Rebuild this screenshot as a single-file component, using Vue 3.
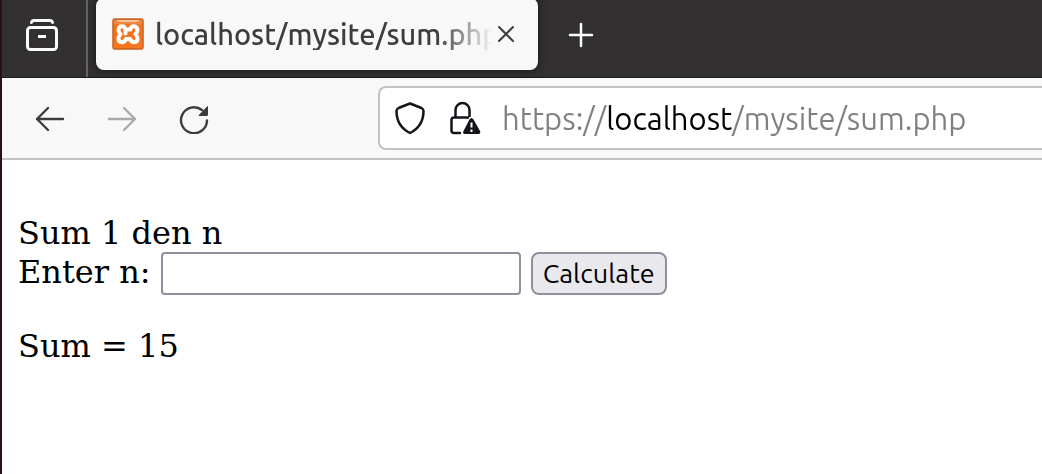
<script setup>
import { ref } from 'vue'

const address = ref('https://localhost/mysite/sum.php')
const n = ref('')
const sum = ref(15)

function calculate() {
  const count = Number(n.value)
  sum.value = (count * (count + 1)) / 2
}
</script>

<template>
  <div class="window">
    <header class="tabs">
      <button class="icon-button archive" aria-label="Recent browsing">
        <svg width="34" height="34" viewBox="0 0 34 34" fill="none" stroke="#fbfbfe" stroke-width="3" stroke-linecap="round">
          <path d="M6.500 4.500Q7 2.500 9 2.500H25Q27 2.500 27.500 4.500" />
          <rect x="2.500" y="9.500" width="29" height="22" rx="3" />
          <path d="M13 18.500H21" stroke-linecap="butt" />
        </svg>
      </button>
      <div class="tab">
        <svg class="favicon" width="32" height="32" viewBox="0 0 32 32">
          <defs>
            <linearGradient id="orange" x1="0" y1="0" x2="0" y2="1">
              <stop offset="0" stop-color="#d9834c" />
              <stop offset="0.14" stop-color="#ef8a46" />
              <stop offset="0.2" stop-color="#f17422" />
              <stop offset="1" stop-color="#f8761d" />
            </linearGradient>
          </defs>
          <rect x="1" y="1" width="30" height="30" rx="2" fill="url(#orange)" stroke="#c8601c" stroke-width="1.500" />
          <path d="M4 2H28Q26 4 22 4H10Q6 4 4 2Z" fill="#f8c39c" />
          <path d="M13.500 15.500V12C13.500 7 6.500 7 6.500 12Q6.500 14.500 8.500 16Q6.500 18 6.500 20.500C6.500 25.500 12.500 25 14 21H18C19.500 25 25.500 25.500 25.500 20.500Q25.500 18 23.500 16Q25.500 14.500 25.500 12C25.500 7 18.500 7 18.500 11.500H13.500" fill="none" stroke="#fff" stroke-width="4" stroke-linejoin="round" stroke-linecap="round" />
        </svg>
        <span class="tab-title">localhost/mysite/sum.php</span>
        <button class="icon-button close" aria-label="Close tab">
          <svg width="18" height="18" viewBox="0 0 18 18" stroke="#3d3d3d" stroke-width="2" stroke-linecap="round">
            <path d="M2 2L16 16M16 2L2 16" />
          </svg>
        </button>
      </div>
      <button class="icon-button new-tab" aria-label="New tab">
        <svg width="26" height="26" viewBox="0 0 26 26" stroke="#fbfbfe" stroke-width="2.500" stroke-linecap="round">
          <path d="M2 13H24M13 2V24" />
        </svg>
      </button>
    </header>

    <nav class="toolbar">
      <button class="icon-button" aria-label="Back">
        <svg width="32" height="32" viewBox="0 0 32 32" fill="none" stroke="#3d3d3d" stroke-width="2.400" stroke-linecap="round" stroke-linejoin="round">
          <path d="M29 17H3M14 6L3 17L14 28" />
        </svg>
      </button>
      <button class="icon-button" aria-label="Forward" disabled>
        <svg width="32" height="32" viewBox="0 0 32 32" fill="none" stroke="#aaa" stroke-width="2.400" stroke-linecap="round" stroke-linejoin="round">
          <path d="M3 17H29M18 6L29 17L18 28" />
        </svg>
      </button>
      <button class="icon-button" aria-label="Reload">
        <svg width="32" height="32" viewBox="0 0 32 32" fill="none" stroke="#3d3d3d" stroke-width="2.400" stroke-linecap="round">
          <path d="M29 18.500A13 13 0 1 1 24 8" />
          <path d="M30 4.500V12.500Q30 14 28.500 14H21.500Q20 14 21 12.800L28.500 5Q30 3.500 30 4.500Z" fill="#3d3d3d" stroke="none" />
        </svg>
      </button>
      <div class="address">
        <svg width="32" height="34" viewBox="0 0 32 34" fill="none" stroke="#15141a" stroke-width="2.500" stroke-linejoin="round">
          <path d="M16 2.500L27.500 7Q29.500 8 29.500 10C29.500 20 26 27 16 32C6 27 2.500 20 2.500 10Q2.500 8 4.500 7Z" />
        </svg>
        <svg class="lock" width="32" height="34" viewBox="0 0 32 34" fill="none" stroke="#15141a" stroke-width="2.500">
          <path d="M6.500 17V9A7 7 0 0 1 20.500 9V16" />
          <path d="M11 32H5Q2.500 32 2.500 29.500V19Q2.500 16.500 5 16.500H19" stroke-linecap="round" />
          <path d="M20.500 18.500Q22.500 15.500 24.500 18.500L31 30Q32 33 29.500 33H16Q13 33 14.500 30Z" fill="#15141a" stroke="none" />
          <path d="M22.500 21.500V26.500M22.500 28.500V31" stroke="#fff" stroke-width="2" />
        </svg>
        <input v-model="address" class="url" type="text" aria-label="Address" spellcheck="false" />
      </div>
    </nav>

    <main class="page">
      <div>Sum 1 den n</div>
      <form class="entry" @submit.prevent="calculate">
        <label for="n">Enter n:</label>
        <input id="n" v-model="n" class="number" type="text" />
        <button class="calculate" type="submit">Calculate</button>
      </form>
      <p class="result">Sum = {{ sum }}</p>
    </main>
  </div>
</template>

<style>
body {
  background: #fff;
}
</style>

<style scoped>
.window {
  min-height: 100vh;
  box-sizing: border-box;
  border-left: 2px solid #2c0f1e;
  overflow: hidden;
  font-family: Ubuntu, "Noto Sans", "Open Sans", sans-serif;
}

.tabs {
  display: flex;
  align-items: stretch;
  height: 78px;
  box-sizing: border-box;
  border-bottom: 1px solid #1c1b1b;
  background: #323031;
}

.icon-button {
  display: flex;
  align-items: center;
  justify-content: center;
  flex: none;
  padding: 0;
  border: 0;
  background: none;
}

.archive {
  width: 86px;
  padding: 0 6px 8px 2px;
  border-right: 2px solid #666465;
}

.tab {
  display: flex;
  align-items: center;
  flex: 0 1 442px;
  min-width: 0;
  box-sizing: border-box;
  margin: -2px 0 7px 8px;
  padding: 0 23px 0 16px;
  border-radius: 8px;
  background: #f8f8f8;
  box-shadow: 0 0 8px #181718;
}

.favicon {
  flex: none;
}

.tab-title {
  flex: 1;
  min-width: 0;
  margin-left: 11px;
  overflow: hidden;
  white-space: nowrap;
  font-size: 29px;
  font-weight: 500;
  color: #3d3d3d;
  mask-image: linear-gradient(to left, transparent, #000 56px);
}

.close {
  margin-left: 4px;
}

.new-tab {
  width: 86px;
  padding-bottom: 7px;
}

.toolbar {
  display: flex;
  align-items: center;
  gap: 40px;
  height: 82px;
  box-sizing: border-box;
  padding: 0 0 0 32px;
  border-bottom: 2px solid #c2c2c2;
  background: #f8f8f8;
}

.address {
  display: flex;
  align-items: center;
  flex: 1;
  height: 64px;
  box-sizing: border-box;
  margin-left: 128px;
  padding-left: 14px;
  border: 2px solid #c2c2c2;
  border-right: 0;
  border-radius: 8px 0 0 8px;
  background: #fff;
}

.address svg {
  flex: none;
}

.address .lock {
  margin-left: 23px;
}

.url {
  flex: 1;
  min-width: 0;
  margin-left: 21px;
  padding: 0;
  border: 0;
  outline: 0;
  font-family: inherit;
  font-size: 31px;
  color: transparent;
  caret-color: #000;
  background: linear-gradient(to right, #808080 105px, #000 105px, #000 230px, #808080 230px);
  background-clip: text;
}

.page {
  padding: 54px 16px 16px;
  font-family: "DejaVu Serif", serif;
  font-size: 32px;
  line-height: 38px;
  color: #000;
}

.entry {
  display: flex;
  align-items: baseline;
  gap: 10px;
}

.number {
  flex: 0 1 360px;
  min-width: 0;
  height: 43px;
  box-sizing: border-box;
  padding: 1px 4px 3px;
  border: 2px solid #8f8f9d;
  border-radius: 4px;
  background: #fff;
  font: 27px/30px Ubuntu, "Noto Sans", sans-serif;
}

.calculate {
  height: 43px;
  box-sizing: border-box;
  padding: 0 10px 2px;
  border: 2px solid #8f8f9d;
  border-radius: 8px;
  background: #e9e9ed;
  color: #000;
  font: 27px/30px Ubuntu, "Noto Sans", sans-serif;
}

.result {
  margin: 32px 0 0;
}
</style>
